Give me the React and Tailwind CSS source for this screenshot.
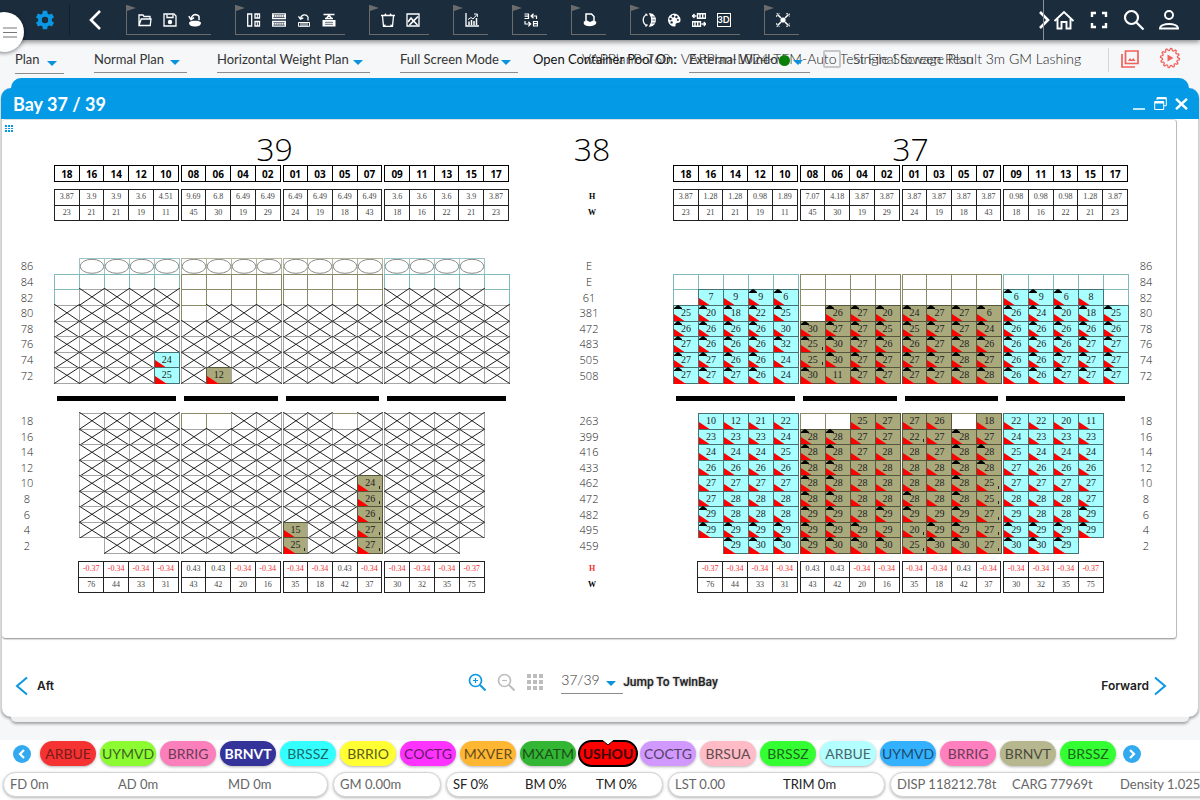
import React from "react";

/* ---------- data ---------- */

const TOP_HEADERS = [
  ["18", "16", "14", "12", "10"],
  ["08", "06", "04", "02"],
  ["01", "03", "05", "07"],
  ["09", "11", "13", "15", "17"],
];

const HOLD_SUMMARY = {
  h: [
    [null, "-0.37", "-0.34", "-0.34", "-0.34"],
    ["0.43", "0.43", "-0.34", "-0.34"],
    ["-0.34", "-0.34", "0.43", "-0.34"],
    ["-0.34", "-0.34", "-0.34", "-0.37", null],
  ],
  w: [
    [null, "76", "44", "33", "31"],
    ["43", "42", "20", "16"],
    ["35", "18", "42", "37"],
    ["30", "32", "35", "75", null],
  ],
};

const DECK_W = [
  ["23", "21", "21", "19", "11"],
  ["45", "30", "19", "29"],
  ["24", "19", "18", "43"],
  ["18", "16", "22", "21", "23"],
];

/* Cell codes: "." no slot, "e" empty, "o" ellipse, "x" blocked, otherwise a
   weight with optional "^" (top mark) and "b" (small mark at lower right). */
const BAY39 = {
  deckH: [
    ["3.87", "3.9", "3.9", "3.6", "4.51"],
    ["9.69", "6.8", "6.49", "6.49"],
    ["6.49", "6.49", "6.49", "6.49"],
    ["3.6", "3.6", "3.6", "3.9", "3.87"],
  ],
  deck: [
    ". o o o o|o o o o|o o o o|o o o o .",
    "e e e e e|e e e e|e e e e|e e e e e",
    "e x x x x|e e e e|e e e e|x x x x e",
    "x x x x x|e x x x|x x x x|x x x x x",
    "x x x x x|x x x x|x x x x|x x x x x",
    "x x x x x|x x x x|x x x x|x x x x x",
    "x x x x 24|x x x x|x x x x|x x x x x",
    "x x x x 25|x 12 x x|x x x x|x x x x x",
  ],
  hold: [
    ". x x x x|e e x x|x x e x|x x x x .",
    ". x x x x|x x x x|x x x x|x x x x .",
    ". x x x x|x x x x|x x x x|x x x x .",
    ". x x x x|x x x x|x x x x|x x x x .",
    ". x x x x|x x x x|x x x 24b|x x x x .",
    ". x x x x|x x x x|x x x 26b|x x x x .",
    ". x x x x|x x x x|x x x 26b|x x x x .",
    ". x x x x|x x x x|15 x x 27b|x x x x .",
    ". . x x x|x x x x|25b x x 27b|x x x . .",
  ],
};

const BAY37 = {
  deckH: [
    ["3.87", "1.28", "1.28", "0.98", "1.89"],
    ["7.07", "4.18", "3.87", "3.87"],
    ["3.87", "3.87", "3.87", "3.87"],
    ["0.98", "0.98", "0.98", "1.28", "3.87"],
  ],
  deck: [
    ". . . . .|. . . .|. . . .|. . . . .",
    "e e e e e|e e e e|e e e e|e e e e e",
    "e 7 9 9^ 6^|e e e e|e e e e|6^ 9^ 6^ 8 e",
    "25^ 20^ 18^ 22^ 25^|e 26^ 27^ 20^|24^ 27^ 27^ 6^|26^ 24^ 20^ 18^ 25^",
    "26^ 26^ 26^ 26^ 30|30^ 27^ 27^ 25^|25^ 27^ 27^ 24^|26^ 26^ 26^ 26^ 26^",
    "27^ 26^ 26^ 26^ 32^|25^b 30^ 27^ 26^|26^ 27^ 28^ 26^|26^ 26^ 26^ 27^ 27^",
    "27^ 27^ 26^ 26^ 24|25b 30^ 27^ 27^|27^ 27^ 28^ 27^|26^ 26^ 27^ 27^ 27^",
    "27^ 27^ 27^ 26^ 24|30^ 11 27^ 27^|27^ 27^ 28^ 28^|26^ 26^ 27^ 27^ 27^",
  ],
  hold: [
    ". 10 12 21 22|e e 25 27|27 26 e 18|22 22 20 11 .",
    ". 23 23 23 24|28^ 28^ 27 27|22b 27 28^ 27|24 23 23 23 .",
    ". 24 24 24 25|28^ 28^ 27 28|28 27 28^ 28^|25 24 24 24 .",
    ". 26 26 26 26|28^ 28^ 28 28|28 28 28^ 28^|27 26 26 26 .",
    ". 27 27 27 27|28^ 28^ 28 28|28 28 28^ 25b|27 27 27 27 .",
    ". 27 28 28 28|28^ 28^ 28 28|28^ 28 28^ 25b|28 28 28 27 .",
    ". 29^ 28 28 28|29^ 29^ 28 29^|29^ 29 29^ 27b|29 28 28 29^ .",
    ". 29^ 29^ 29^ 29^|29^ 29^ 29^ 29|20b 29^ 29^ 27b|29^ 29^ 29^ 29^ .",
    ". . 29^ 30^ 30^|29^ 30^ 30^ 30^|25b 30^ 30^ 27b|30^ 30^ 29^ . .",
  ],
};

const DECK_ROWS = ["86", "84", "82", "80", "78", "76", "74", "72"];
const HOLD_ROWS = ["18", "16", "14", "12", "10", "8", "6", "4", "2"];
const DECK_TOTALS = ["E", "E", "61", "381", "472", "483", "505", "508"];
const HOLD_TOTALS = ["263", "399", "416", "433", "462", "472", "482", "495", "459"];

const PORTS = [
  ["ARBUE", "bg-[#f63333] text-[#7a1a1a]"],
  ["UYMVD", "bg-[#8dfb32] text-[#3b6620]"],
  ["BRRIG", "bg-[#fb7fbb] text-[#6b3a55]"],
  ["BRNVT", "bg-[#33339a] text-white font-bold"],
  ["BRSSZ", "bg-[#33ffff] text-[#1a6a6a]"],
  ["BRRIO", "bg-[#ffff33] text-[#5c5c1c]"],
  ["COCTG", "bg-[#ff33ff] text-[#661a66]"],
  ["MXVER", "bg-[#ffb733] text-[#664c1c]"],
  ["MXATM", "bg-[#33b633] text-[#1a4f1a]"],
  ["USHOU", "active"],
  ["COCTG", "bg-[#d199ff] text-[#554066]"],
  ["BRSUA", "bg-[#ffbcc6] text-[#614a4e]"],
  ["BRSSZ", "bg-[#33ff33] text-[#1c661c]"],
  ["ARBUE", "bg-[#b4ffff] text-[#48666a]"],
  ["UYMVD", "bg-[#33b1ff] text-[#1c4c6b]"],
  ["BRRIG", "bg-[#ff7fbf] text-[#6b3a55]"],
  ["BRNVT", "bg-[#b7b78f] text-[#4c4c3c]"],
  ["BRSSZ", "bg-[#33ff33] text-[#1c661c]"],
];

const PLAN_COLS = "grid grid-cols-[52px_minmax(0,1fr)_164px_minmax(0,1fr)_48px]";
const GROUP_COLS = "grid grid-cols-[5fr_4fr_4fr_5fr] gap-[2px]";

/* ---------- toolbar icons (14 x 14) ---------- */

const Ico = ({ children }) => (
  <svg className="h-[14px] w-[14px]" viewBox="0 0 14 14" fill="none" stroke="#fff" strokeWidth="1.3">
    {children}
  </svg>
);

const icons = {
  Open: <Ico><path d="M1 12V2h4l1 1.5h6V6M1 12.5h11.2L13 6H3.2z" /></Ico>,
  Save: <Ico><path d="M1 1h10l2 2v10H1z" /><path d="M4 1.5v3h6v-3" /><circle cx="7" cy="9" r="2.2" fill="#fff" stroke="none" /></Ico>,
  Revert: <Ico><path d="M1 9.500c2-1.800 3.500-1.800 6-1.800s4 0 6 1.800c0 3-2.500 4-6 4s-6-1-6-4z" fill="#fff" stroke="none" /><path d="M3 6C4 1.500 8 .3 11 3.300v4" strokeWidth="1.500" /><path d="M.8 3.200L3 6.600l3-2" strokeWidth="1.500" /></Ico>,
  Columns: <Ico><path d="M.7 1h4v12h-4zM8 1h4.500v4H8zM8 8.500h4.500V13H8z" /><path d="M10.300 1v4M10.300 8.500V13" strokeWidth="1" /></Ico>,
  Rows: <Ico><path d="M.7 .8h12.600v4.700H.7zM.7 8.500h12.600v4.700H.7z" /><path d="M1 3.100h12M1 10.800h12" strokeWidth="2" strokeDasharray="1.500 .6" /></Ico>,
  Reload: <Ico><path d="M1.500 9.500h11v3.800h-11zM4 9.500v4M6 9.500v4M8 9.500v4M10 9.500v4" strokeWidth="1" /><path d="M3.500 5.500C4.500 1.500 9 .5 11 4v3.500" /><path d="M1.500 3.400l2 2.800 2.800-1.400" /></Ico>,
  Crane: <Ico><path d="M.5 7h13v6.500H.5z" fill="#fff" stroke="none" /><path d="M3 9.300h8M3 11.300h8" stroke="#1b2c3d" strokeWidth=".7" /><path d="M1.500 1.500h11M4 6l3-4 3 4M3 5.500h8" /></Ico>,
  Crate: <Ico><path d="M0 2.500h14M1.500 3l1 10.300h9L12.500 3M3.500 2.500L5 .8M10.500 2.500L9 .8" /><path d="M2.500 13.300l2-1.500M11.500 13.300l-2-1.500" /></Ico>,
  Picture: <Ico><path d="M1 1h12v12H1z" /><path d="M2 9l3-4 2.500 3L12 3.500M3.500 12l4-4 4 4" strokeWidth="1.600" /></Ico>,
  Chart: <Ico><path d="M1 0v13h13" /><path d="M4 12V8.500M6.500 12V7M9 12V8M11.500 12V5" strokeWidth="1.500" /><path d="M3 6.500l3-2 2 1.500L12 1.500M9 1h3.300v3" strokeWidth="1" /></Ico>,
  Swap: <Ico><path d="M.5 1h4v4.500h-4M.5 3.200h4M7 3h5.500v3M9.500.8L7 3l2.500 2.200M9.500 8.500H13.500v4.500H9.500zM9.500 10.700h4M1 8v3h5.500M4.300 8.800L6.700 11 4.300 13.400" strokeWidth="1.200" /></Ico>,
  Ship: <Ico><path d="M3 8V1h5.500L11 3.500V8" strokeWidth="1.500" /><path d="M.8 8.500L4 7.500l3 1.500 3-1.500 3.200 1v2C11 14 3 14 .8 11z" fill="#fff" stroke="none" /></Ico>,
  Turn: <Ico><path d="M5 1.500c-5 1.800-5 9.200 0 11M5.500 2.500L3.500.7M5.500 11.500l-2 2" /><path d="M8 1c7 0 7 12 0 12 2.500-3.500 2.500-8.500 0-12z" fill="#fff" /><path d="M9.800 4h3M10.300 7h3M9.800 10h3" stroke="#1b2c3d" strokeWidth=".7" /></Ico>,
  Palette: <Ico><path d="M7 .5a6.500 6.500 0 1 0 1 13c1.500-.5-.5-2.500 1.500-3.300 2-.7 4-.2 4-3.200A6.500 6.500 0 0 0 7 .5z" fill="#fff" stroke="none" /><g fill="#1b2c3d" stroke="none"><circle cx="3.500" cy="6" r="1.200" /><circle cx="6" cy="3.300" r="1.200" /><circle cx="9.400" cy="4" r="1.200" /><circle cx="4.600" cy="9.400" r="1.200" /><circle cx="10.800" cy="7" r="1" /></g></Ico>,
  Exchange: <Ico><path d="M5.500 .8h8v4.400h-8zM8 1v4M10.700 1v4M.5 8.800h8v4.400h-8zM3 9v4M5.700 9v4" strokeWidth="1.400" /><path d="M0 3h4.500M2.500 1L.3 3l2.200 2M9.500 11H14M11.700 9l2.200 2-2.200 2" strokeWidth="1.300" /></Ico>,
  Expand: <Ico><path d="M1.500 1.500l3.500 3.500M12.500 1.500L9 5M1.500 12.500L5 9M12.500 12.500L9 9" strokeWidth="1.500" /><circle cx="7" cy="7" r="2.600" fill="#fff" stroke="none" /><path d="M.7 4V.7H4M10 .7h3.300V4M.7 10v3.300H4M10 13.300h3.300V10" strokeWidth=".9" strokeDasharray="2 1" /></Ico>,
};

const ThreeD = () => (
  <span className="flex h-[14px] w-[14px] items-center justify-center border border-white text-[9px] leading-none font-bold text-white">3D</span>
);

const TOOL_GROUPS = [
  ["Open", "Save", "Revert"],
  ["Columns", "Rows", "Reload", "Crane"],
  ["Crate", "Picture"],
  ["Chart"],
  ["Swap"],
  ["Ship"],
  ["Turn", "Palette", "Exchange", "3D"],
  ["Expand"],
];

function TopBar() {
  return (
    <header className="relative z-20 flex h-10 items-center bg-[#1b2c3d] shadow-[0_2px_5px_rgba(0,0,0,0.45)]">
      <button aria-label="Menu" className="absolute top-3 -left-4 flex h-10 w-10 items-center justify-end rounded-full bg-white pr-[7px] shadow-[0_1px_4px_rgba(0,0,0,0.5)]">
        <svg className="h-[11px] w-[14px]" viewBox="0 0 14 11" stroke="#777" strokeWidth="1"><path d="M0 1h14M0 5.500h14M0 10h14" /></svg>
      </button>
      <button aria-label="Settings" className="ml-[34px] h-[22px] w-[22px]">
        <svg className="h-[22px] w-[22px]" viewBox="0 0 24 24" fill="#0a97e3"><path d="M19.430 12.980c.04-.32.07-.64.07-.98s-.03-.66-.07-.98l2.110-1.650a.5.5 0 0 0 .12-.64l-2-3.460a.5.5 0 0 0-.61-.22l-2.490 1a7.300 7.300 0 0 0-1.690-.98l-.38-2.650A.49.49 0 0 0 14 2h-4a.49.49 0 0 0-.49.42l-.38 2.650c-.61.25-1.170.59-1.690.98l-2.490-1a.5.5 0 0 0-.61.22l-2 3.460a.5.5 0 0 0 .12.64l2.110 1.650c-.04.32-.07.65-.07.98s.03.66.07.98l-2.110 1.650a.5.5 0 0 0-.12.64l2 3.460c.12.22.39.3.61.22l2.490-1c.52.4 1.080.73 1.690.98l.38 2.650c.03.24.24.42.49.42h4c.25 0 .46-.18.49-.42l.38-2.650c.61-.25 1.170-.59 1.690-.98l2.490 1c.23.09.49 0 .61-.22l2-3.460a.5.5 0 0 0-.12-.64zM12 15.500a3.500 3.500 0 1 1 0-7 3.500 3.500 0 0 1 0 7z" /></svg>
      </button>
      <span className="ml-[13px] h-8 w-px bg-[#122030]" />
      <button aria-label="Previous tools" className="ml-[17px] w-4">
        <svg className="h-5 w-4" viewBox="0 0 16 20" fill="none" stroke="#fff" strokeWidth="2.600"><path d="M13 1L4 10l9 9" /></svg>
      </button>
      <nav className="ml-[23px] flex gap-6">
        {TOOL_GROUPS.map((group, i) => (
          <div key={i} className="relative flex h-[30px] items-center border-b border-l border-[#6b6b6b] pr-1 pl-[5px]">
            <svg className="absolute top-0 left-0 h-[6px] w-[9px]" viewBox="0 0 9 6" fill="#6b6b6b"><path d="M0 0l9 3-9 3z" /></svg>
            {group.map((name) => (
              <button key={name} aria-label={name} className="flex w-[25px] justify-center">
                {name === "3D" ? <ThreeD /> : icons[name]}
              </button>
            ))}
          </div>
        ))}
      </nav>
      <div className="ml-auto flex h-10 items-center pr-5">
        <button aria-label="Next tools" className="relative flex h-10 w-[15px] items-center">
          <span className="absolute top-0 left-[5px] h-10 w-px bg-[#8a939b]" />
          <svg className="h-5 w-[14px]" viewBox="0 0 14 20" fill="none" stroke="#fff" strokeWidth="2.600"><path d="M2 2l8 8-8 8" /></svg>
        </button>
        <div className="flex items-center gap-[13px]">
          <button aria-label="Home"><svg className="h-[22px] w-[22px]" viewBox="0 0 22 22" fill="none" stroke="#fff" strokeWidth="1.900"><path d="M1.500 12L11 3l9.500 9M4.500 10v9.500h4V13h5v6.500h4V10" /></svg></button>
          <button aria-label="Full screen"><svg className="h-[22px] w-[22px]" viewBox="0 0 22 22" fill="none" stroke="#fff" strokeWidth="2.400"><path d="M4 8V4h4M14 4h4v4M18 14v4h-4M8 18H4v-4" /></svg></button>
          <button aria-label="Search"><svg className="h-[22px] w-[22px]" viewBox="0 0 22 22" fill="none" stroke="#fff" strokeWidth="2.200"><circle cx="8.500" cy="8.500" r="6.500" /><path d="M13.500 13.500l7 7" /></svg></button>
          <button aria-label="Account"><svg className="h-[22px] w-[22px]" viewBox="0 0 22 22" fill="none" stroke="#fff" strokeWidth="1.900"><circle cx="11" cy="6" r="4" /><path d="M2 19.500c0-6 18-6 18 0z" /></svg></button>
        </div>
      </div>
    </header>
  );
}

/* ---------- options bar ---------- */

const COG_TEETH = 12;
const COG_PATH =
  Array.from({ length: COG_TEETH * 4 }, (_, i) => {
    const r = i % 4 < 2 ? 9.6 : 7.6;
    const a = ((i + 0.5) / (COG_TEETH * 4)) * 2 * Math.PI;
    return `${i ? "L" : "M"}${(11 + r * Math.cos(a)).toFixed(2)} ${(11 + r * Math.sin(a)).toFixed(2)}`;
  }).join("") + "Z";

function Picker({ label, width, tall, big }) {
  return (
    <div className={`relative shrink-0 ${width}`}>
      <select aria-label={label} className={`w-full appearance-none border-b border-[#8c8c8c] bg-transparent px-0 pt-0 leading-5 text-[#333] outline-none ${big ? "pb-[3px] text-[14px] font-light" : "pb-[5px] text-[13px]"} ${tall ? "h-[25px]" : "h-[24px]"}`}>
        <option>{label}</option>
      </select>
      <svg className="pointer-events-none absolute right-[7px] bottom-[8px] h-[5px] w-[10px]" viewBox="0 0 10 5" fill="#0a93dc"><path d="M0 0h10L5 5z" /></svg>
    </div>
  );
}

function OptionsBar() {
  return (
    <div className="relative flex h-[38px] items-start bg-[#f5f7f9] pt-2 pl-[15px] text-[14px] text-[#222]">
      <div className="flex items-start gap-[30px]">
        <Picker label="Plan" width="w-[49px]" tall />
        <Picker label="Normal Plan" width="w-[93px]" />
        <Picker label="Horizontal Weight Plan" width="w-[153px]" />
        <Picker label="Full Screen Mode" width="w-[118px]" />
      </div>
      <span className="absolute top-[9px] left-[533px] text-[13px] leading-5 whitespace-nowrap text-[#111]">Open Container Pool On:</span>
      <span className="absolute top-[9px] left-[582px] leading-5 font-light whitespace-nowrap">VAPPlanP-760 : VAPPlan-L024-TEM-Auto Test Final Screen Result 3m GM Lashing</span>
      <div className="absolute top-2 left-[689px]"><Picker label="External Window" width="w-[121px]" /></div>
      <span className="absolute top-[15px] left-[779px] h-[11px] w-[11px] rounded-full bg-[#0a800a]" />
      <label className="absolute top-[9px] left-[823px] flex items-center gap-3 leading-5 font-light whitespace-nowrap">
        <input type="checkbox" className="h-[18px] w-[18px] appearance-none rounded-[2px] border-2 border-[#c4c6c8]" />
        Single Stowage Plan
      </label>
      <div className="ml-auto flex items-start pr-[19px]">
        <span className="h-[24px] w-px bg-[#d3d5d7]" />
        <button aria-label="Gallery" className="ml-3 pt-[2px]">
          <svg className="h-[18px] w-[18px]" viewBox="0 0 18 18" fill="none" stroke="#f4605b" strokeWidth="1.700"><path d="M4.500 1h12.500v12.500H4.500z" /><path d="M1 4v13h13" /><path d="M7 11l2-3 1.700 2 1.600-2 2.200 3z" fill="#f4605b" stroke="none" /></svg>
        </button>
        <button aria-label="Run" className="-mt-px ml-5">
          <svg className="h-[22px] w-[22px]" viewBox="0 0 22 22" fill="none" stroke="#f4605b" strokeWidth="1.200"><path d={COG_PATH} /><path d="M8.500 7.500v7l6-3.500z" fill="#f4605b" stroke="none" /></svg>
        </button>
      </div>
    </div>
  );
}

/* ---------- bay plan ---------- */

function Cell({ code, side, aboveCross }) {
  if (code === ".") return <div />;
  const empty = side ? "border-[#7fb9ba] bg-white" : "border-[#8a8a68] bg-white";
  if (code === "e") return <div className={`-mr-px -mb-px border ${empty}`} />;
  if (code === "o") {
    return (
      <div className={`-mr-px -mb-px border ${side ? "border-[#9cc4c4]" : "border-[#b4b49c]"}`}>
        <svg className="block h-full w-full" viewBox="0 0 24 14" preserveAspectRatio="none" fill="none" stroke="#8a8a8a" strokeWidth="1"><ellipse cx="12" cy="7" rx="11.800" ry="6.700" vectorEffect="non-scaling-stroke" /></svg>
      </div>
    );
  }
  if (code === "x") {
    return (
      <div className="relative -mr-px -mb-px border border-[#a6a6a6] bg-white">
        <svg className={`absolute -bottom-px -left-px w-[calc(100%+2px)] ${aboveCross ? "h-[calc(100%+2px)]" : "h-[calc(100%+3px)]"}`} viewBox="0 0 25 16" preserveAspectRatio="none" stroke="#222" strokeWidth="1"><path d="M0 0l25 16M25 0L0 16" vectorEffect="non-scaling-stroke" /></svg>
      </div>
    );
  }
  const hat = code.includes("^");
  const mark = code.includes("b");
  return (
    <div className={`relative -mr-px -mb-px border text-center font-['Liberation_Serif',serif] text-[10px] leading-[13px] text-[#1c1c1c] ${side ? "border-[#477273] bg-[#a8ffff]" : "border-[#55563e] bg-[#a9a97c]"}`}>
      <svg className="absolute -bottom-px left-0 h-[8px] w-[12px]" viewBox="0 0 12 8"><path d="M0 0l12 8H0z" fill="#f00" /></svg>
      {hat && <svg className="absolute -top-px left-0 h-[4px] w-[8px]" viewBox="0 0 8 4"><path d="M0 4V3L2.500 1 4 0l1.500 1L8 3v1z" fill="#000" /></svg>}
      {mark && <span className="absolute right-[2px] bottom-[2px] h-[3px] w-px bg-[#222]" />}
      <span className="relative">{code.replace(/[\^b]/g, "")}</span>
    </div>
  );
}

function Stack({ rows, height }) {
  const parsed = rows.map((r) => r.split("|").map((g) => g.split(" ")));
  return (
    <div className={`${GROUP_COLS} ${height}`}>
      {[0, 1, 2, 3].map((g) => {
        const side = g === 0 || g === 3;
        return (
          <div key={g} className={`grid auto-rows-fr ${side ? "grid-cols-5" : "grid-cols-4"}`}>
            {parsed.map((row, r) =>
              row[g].map((code, c) => (
                <Cell key={`${r}-${c}`} code={code} side={side} aboveCross={r > 0 && parsed[r - 1][g][c] === "x"} />
              ))
            )}
          </div>
        );
      })}
    </div>
  );
}

function HeaderTables() {
  return (
    <div className={GROUP_COLS}>
      {TOP_HEADERS.map((g, i) => (
        <table key={i} className="w-full table-fixed border-collapse">
          <thead>
            <tr>{g.map((n) => <th key={n} className="h-4 border border-black p-0 text-center font-['Open_Sans',sans-serif] text-[10px] leading-[14px] font-bold">{n}</th>)}</tr>
          </thead>
        </table>
      ))}
    </div>
  );
}

function SummaryTables({ h, w }) {
  return (
    <div className={GROUP_COLS}>
      {h.map((g, i) => (
        <table key={i} className="h-8 w-full table-fixed border-collapse font-['Liberation_Serif',serif] text-[8px] leading-[14px] text-[#444]">
          <tbody>
            {[g, w[i]].map((row, r) => (
              <tr key={r}>
                {row.map((v, c) =>
                  v === null ? (
                    <td key={c} className="p-0" />
                  ) : (
                    <td key={c} className={`border border-[#222] p-0 text-center ${v.startsWith("-") ? "text-[#f03030]" : ""}`}>{v}</td>
                  )
                )}
              </tr>
            ))}
          </tbody>
        </table>
      ))}
    </div>
  );
}

function Labels({ items, pad }) {
  return (
    <div className={`grid h-full auto-rows-fr justify-items-center font-['Open_Sans',sans-serif] text-[11px] font-light text-[#222] ${pad}`}>
      {items.map((t, i) => <span key={i} className="flex items-center leading-none">{t}</span>)}
    </div>
  );
}

const HatchBars = () => (
  <div className={GROUP_COLS}>
    {[0, 1, 2, 3].map((i) => <div key={i} className="mx-[3px] h-[5px] bg-black" />)}
  </div>
);

const HW = ({ red }) => (
  <div className="grid h-8 grid-rows-2 items-center justify-items-center pl-[2px] font-['Liberation_Serif',serif] text-[8px] leading-none font-bold">
    <span className={red ? "text-[#f03030]" : ""}>H</span>
    <span>W</span>
  </div>
);

function BayPlan() {
  return (
    <section className="relative mr-[21px] h-[520px] rounded-[4px] border border-l-0 border-t-[#ddd] border-r-[#bbb] border-b-[#a8a8a8] bg-white pt-[13px] shadow-[0_1px_1px_rgba(0,0,0,0.15)]">
      <svg className="absolute top-[5px] left-[3px] h-[7px] w-[8px]" viewBox="0 0 8 7" fill="#0a97e3"><path d="M0 0h2v2H0zM3 0h2v2H3zM6 0h2v2H6zM0 3h2v1H0zM3 3h2v1H3zM6 3h2v1H6zM0 5h2v2H0zM3 5h2v2H3zM6 5h2v2H6z" /></svg>
      <div className={`${PLAN_COLS} text-center font-['Open_Sans',sans-serif] text-[32px] leading-8 font-light text-black`}>
        <span />
        <h2 className="pr-[14px]">39</h2>
        <h2 className="pl-[2px]">38</h2>
        <h2 className="pl-[20px]">37</h2>
      </div>
      <div className={PLAN_COLS}><span /><HeaderTables /><span /><HeaderTables /></div>
      <div className={`${PLAN_COLS} mt-[7px]`}><span /><SummaryTables h={BAY39.deckH} w={DECK_W} /><HW /><SummaryTables h={BAY37.deckH} w={DECK_W} /></div>
      <div className={`${PLAN_COLS} mt-[37px]`}>
        <Labels items={DECK_ROWS} pad="pr-[2px]" />
        <Stack rows={BAY39.deck} height="h-[125px]" />
        <Labels items={DECK_TOTALS} pad="pr-1" />
        <Stack rows={BAY37.deck} height="h-[125px]" />
        <Labels items={DECK_ROWS} pad="pr-3" />
      </div>
      <div className={`${PLAN_COLS} mt-[13px]`}><span /><HatchBars /><span /><HatchBars /></div>
      <div className={`${PLAN_COLS} mt-3`}>
        <Labels items={HOLD_ROWS} pad="pr-[2px]" />
        <Stack rows={BAY39.hold} height="h-[140px]" />
        <Labels items={HOLD_TOTALS} pad="pr-1" />
        <Stack rows={BAY37.hold} height="h-[140px]" />
        <Labels items={HOLD_ROWS} pad="pr-3" />
      </div>
      <div className={`${PLAN_COLS} mt-2`}><span /><SummaryTables {...HOLD_SUMMARY} /><HW red /><SummaryTables {...HOLD_SUMMARY} /></div>
    </section>
  );
}

function PlanWindow() {
  return (
    <main className="bg-[#f5f7f9] pb-[18px]">
      <div className="mx-[11px] h-[10px] rounded-t-[10px] bg-[#059ae6]" />
      <div className="mx-px rounded-[10px] border-r border-l border-[#d0d0d0] bg-white shadow-[0_2px_3px_rgba(0,0,0,0.35)]">
        <div className="-mx-px flex h-[31px] items-center rounded-t-[10px] bg-[#059ae6] pr-[11px] pl-3 text-white">
          <h1 className="text-[18px] leading-5 font-bold">Bay 37 / 39</h1>
          <div className="ml-auto flex items-center gap-2">
            <button aria-label="Minimize"><svg className="h-[13px] w-[13px]" viewBox="0 0 13 13" stroke="#fff" strokeWidth="1.500"><path d="M0 12h12" /></svg></button>
            <button aria-label="Restore"><svg className="h-[13px] w-[13px]" viewBox="0 0 13 13" fill="none" stroke="#fff"><path d="M3 3V.7h9.300v8H10M.7 4.500h9v8h-9z" /><path d="M.7 5.500h9M3 1.200h9" strokeWidth="2" /></svg></button>
            <button aria-label="Close"><svg className="h-[12px] w-[13px]" viewBox="0 0 13 12" stroke="#fff" strokeWidth="2.400"><path d="M1 .8l11 10.400M12 .8L1 11.200" /></svg></button>
          </div>
        </div>
        <BayPlan />
        <div className="grid h-[78px] grid-cols-[1fr_auto_1fr] items-start pt-[30px] text-[12px]">
          <button className="mt-[7px] ml-3 flex items-center gap-2 justify-self-start font-['Inter',sans-serif] leading-5 font-semibold text-[#222]">
            <svg className="h-5 w-[15px]" viewBox="0 0 15 20" fill="none" stroke="#0a97e3" strokeWidth="2"><path d="M13 1.500L3 10l10 8.500" /></svg>
            Aft
          </button>
          <div className="flex items-start pr-[14px]">
            <button aria-label="Zoom in" className="mt-1"><svg className="h-[18px] w-[18px]" viewBox="0 0 18 18" fill="none" stroke="#0a97e3" strokeWidth="1.700"><circle cx="7.500" cy="7.500" r="6" /><path d="M12 12l5.500 5.500" strokeWidth="2" /><path d="M5 7.500h5M7.500 5v5" strokeWidth="1.200" /></svg></button>
            <button aria-label="Zoom out" className="mt-1 ml-[11px]"><svg className="h-[18px] w-[18px]" viewBox="0 0 18 18" fill="none" stroke="#bdbdbd" strokeWidth="1.700"><circle cx="7.500" cy="7.500" r="6" /><path d="M12 12l5.500 5.500" strokeWidth="2" /><path d="M5 7.500h5" strokeWidth="1.200" /></svg></button>
            <button aria-label="Grid" className="mt-[5px] ml-3"><svg className="h-[16px] w-[16px]" viewBox="0 0 16 16" fill="#bdbdbd"><path d="M0 0h4v4H0zM6 0h4v4H6zM12 0h4v4h-4zM0 6h4v4H0zM6 6h4v4H6zM12 6h4v4h-4zM0 12h4v4H0zM6 12h4v4H6zM12 12h4v4h-4z" /></svg></button>
            <div className="ml-[18px]"><Picker label="37/39" width="w-[62px]" tall big /></div>
            <span className="mt-[3px] font-['Roboto',sans-serif] leading-5 font-medium text-[#222] [text-shadow:0_0_2px_rgba(0,0,0,0.4)]">Jump To TwinBay</span>
          </div>
          <button className="mt-[7px] mr-[30px] flex items-center gap-1 justify-self-end font-['Inter',sans-serif] leading-5 font-semibold text-[#222]">
            Forward
            <svg className="h-5 w-[15px]" viewBox="0 0 15 20" fill="none" stroke="#0a97e3" strokeWidth="2"><path d="M2 1.500L12 10 2 18.500" /></svg>
          </button>
        </div>
      </div>
      <div className="mx-[11px] h-[5px] rounded-b-[8px] bg-[#f0f0f0] shadow-[0_2px_3px_rgba(0,0,0,0.35)]" />
    </main>
  );
}

/* ---------- port rotation and status ---------- */

const RoundArrow = ({ label, d }) => (
  <button aria-label={label} className="flex h-[18px] w-[18px] shrink-0 items-center justify-center rounded-full bg-[#33aaf0]">
    <svg className="h-[10px] w-[8px]" viewBox="0 0 8 10" fill="none" stroke="#fff" strokeWidth="2.200"><path d={d} /></svg>
  </button>
);

function Ports() {
  return (
    <div className="flex h-[27px] items-center bg-white pl-[13px]">
      <RoundArrow label="Previous ports" d="M6 1L2 5l4 4" />
      <div className="mr-[7px] ml-[9px] flex items-center gap-1">
        {PORTS.map(([name, style], i) =>
          style === "active" ? (
            <button key={i} className="relative -mx-[2px] h-[27px] w-[60px] rounded-full border-2 border-black bg-[#f00] text-[14px] leading-5 font-bold text-[#3a0505]">
              {name}
              <svg className="absolute -top-[2px] left-[22px] h-[5px] w-3" viewBox="0 0 12 5"><path d="M0 0h12L6 5z" fill="#fff" /><path d="M0 0l6 5 6-5" fill="none" stroke="#000" /></svg>
            </button>
          ) : (
            <button key={i} className={`h-[25px] w-[56px] rounded-full text-[14px] leading-[25px] shadow-[0_1px_3px_rgba(0,0,0,0.3)] ${style}`}>{name}</button>
          )
        )}
      </div>
      <RoundArrow label="Next ports" d="M2 1l4 4-4 4" />
    </div>
  );
}

const PILL = "flex h-[25px] shrink-0 items-center rounded-full border border-[#d4d4d4] bg-white px-[6px] shadow-[0_1px_3px_rgba(0,0,0,0.3)]";

function Status() {
  return (
    <footer className="flex gap-[5px] overflow-hidden bg-white pt-[5px] pb-[3px] pl-[3px] text-[13px] whitespace-nowrap text-[#666]">
      <div className={`${PILL} w-[325px]`}><span className="w-[108px]">FD 0m</span><span className="w-[110px]">AD 0m</span><span>MD 0m</span></div>
      <div className={`${PILL} w-[108px]`}>GM 0.00m</div>
      <div className={`${PILL} w-[217px] text-[#222]`}><span className="w-[72px]">SF 0%</span><span className="w-[71px]">BM 0%</span><span>TM 0%</span></div>
      <div className={`${PILL} w-[217px]`}><span className="w-[108px]">LST 0.00</span><span className="text-[#222]">TRIM 0m</span></div>
      <div className={`${PILL} w-[325px]`}><span className="w-[115px]">DISP 118212.78t</span><span className="w-[108px]">CARG 77969t</span><span>Density 1.025</span></div>
    </footer>
  );
}

export default function App() {
  return (
    <div className="min-h-screen overflow-x-hidden bg-white font-['Lato',sans-serif]">
      <TopBar />
      <OptionsBar />
      <PlanWindow />
      <Ports />
      <Status />
    </div>
  );
}
